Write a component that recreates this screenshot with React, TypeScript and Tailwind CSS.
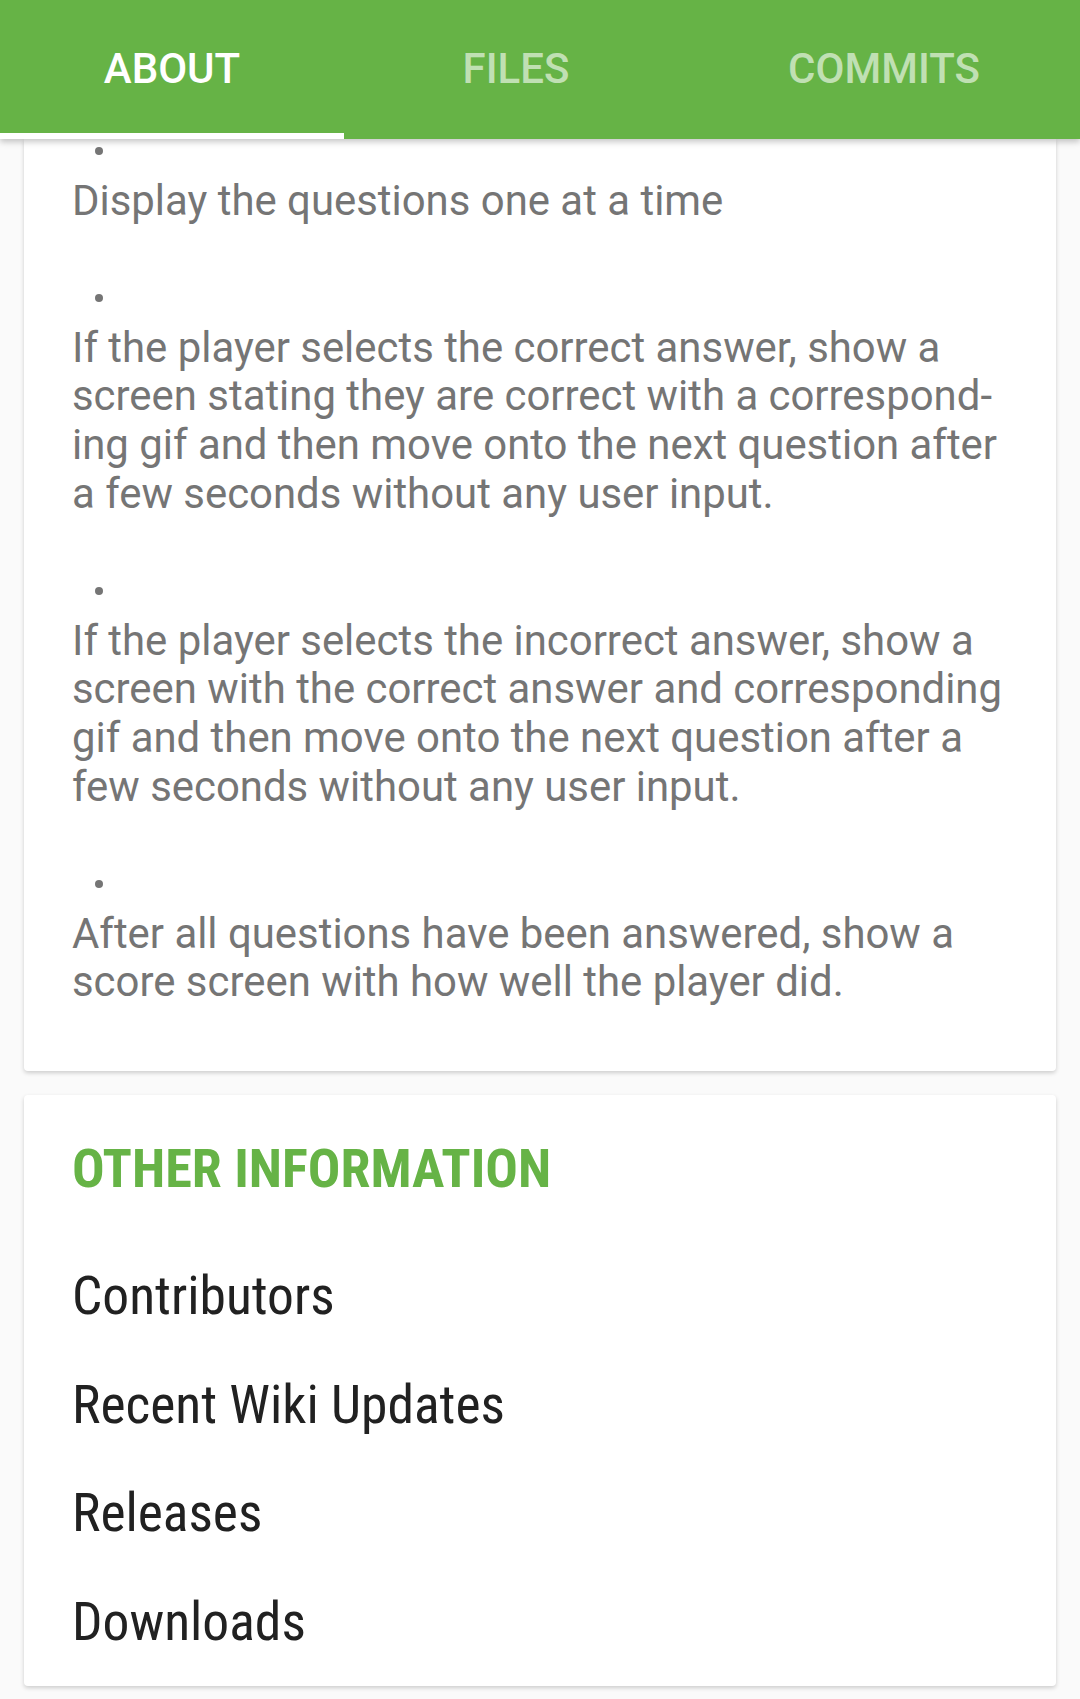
import React from "react";

const tabs = [
  { label: "ABOUT", active: true, w: "w-[344px]" },
  { label: "FILES", active: false, w: "w-[344px]" },
  { label: "COMMITS", active: false, w: "flex-1" },
];

const goals = [
  ["Display the questions one at a time"],
  [
    "If the player selects the correct answer, show a",
    "screen stating they are correct with a correspond-",
    "ing gif and then move onto the next question after",
    "a few seconds without any user input.",
  ],
  [
    "If the player selects the incorrect answer, show a",
    "screen with the correct answer and corresponding",
    "gif and then move onto the next question after a",
    "few seconds without any user input.",
  ],
  [
    "After all questions have been answered, show a",
    "score screen with how well the player did.",
  ],
];

const links = ["Contributors", "Recent Wiki Updates", "Releases", "Downloads"];

export default function App() {
  return (
    <div className="min-h-screen bg-[#fafafa] font-['Roboto',sans-serif]">
      {/* tab bar */}
      <div className="relative z-10 flex h-[139px] bg-[#66b346] shadow-[0_3px_6px_rgba(0,0,0,0.22)]">
        {tabs.map((t) => (
          <div key={t.label} className={`${t.w} flex flex-col items-center justify-between`}>
            <span
              className={`pt-[44px] text-[42px] font-medium leading-[49px] ${
                t.active ? "text-white" : "text-white/60"
              }`}
            >
              {t.label}
            </span>
            <div className={`h-[6px] w-full ${t.active ? "bg-white" : "bg-transparent"}`} />
          </div>
        ))}
      </div>

      {/* readme card (scrolled) */}
      <div className="mx-[24px] rounded-b-[4px] bg-white pb-[64px] pl-[48px] pt-[8px] shadow-[0_2px_4px_rgba(0,0,0,0.18)]">
        {goals.map((lines, i) => (
          <div key={i} className={i > 0 ? "mt-[68.8px]" : ""}>
            <div className="ml-[23px] h-[8px] w-[8px] rounded-full bg-[#757575]" />
            <p className="mt-[21.5px] whitespace-nowrap text-[41.9px] leading-[48.7px] text-[#757575]">
              {lines.map((l, j) => (
                <React.Fragment key={j}>
                  {l}
                  {j < lines.length - 1 && <br />}
                </React.Fragment>
              ))}
            </p>
          </div>
        ))}
      </div>

      {/* other information */}
      <div className="mx-[24px] mt-[24px] mb-[12px] rounded-[4px] bg-white pb-[10px] pl-[48px] pt-[42px] shadow-[0_2px_4px_rgba(0,0,0,0.18)]">
        <h2 className="text-[54.2px] font-bold leading-[64px] text-[#66b346] font-stretch-[87.5%]">
          OTHER INFORMATION
        </h2>
        <div className="mt-[41px]">
          {links.map((l) => (
            <div key={l} className="h-[108.5px] text-[53.5px] leading-[108.5px] text-[#212121] font-stretch-[87.5%]">
              {l}
            </div>
          ))}
        </div>
      </div>
    </div>
  );
}
